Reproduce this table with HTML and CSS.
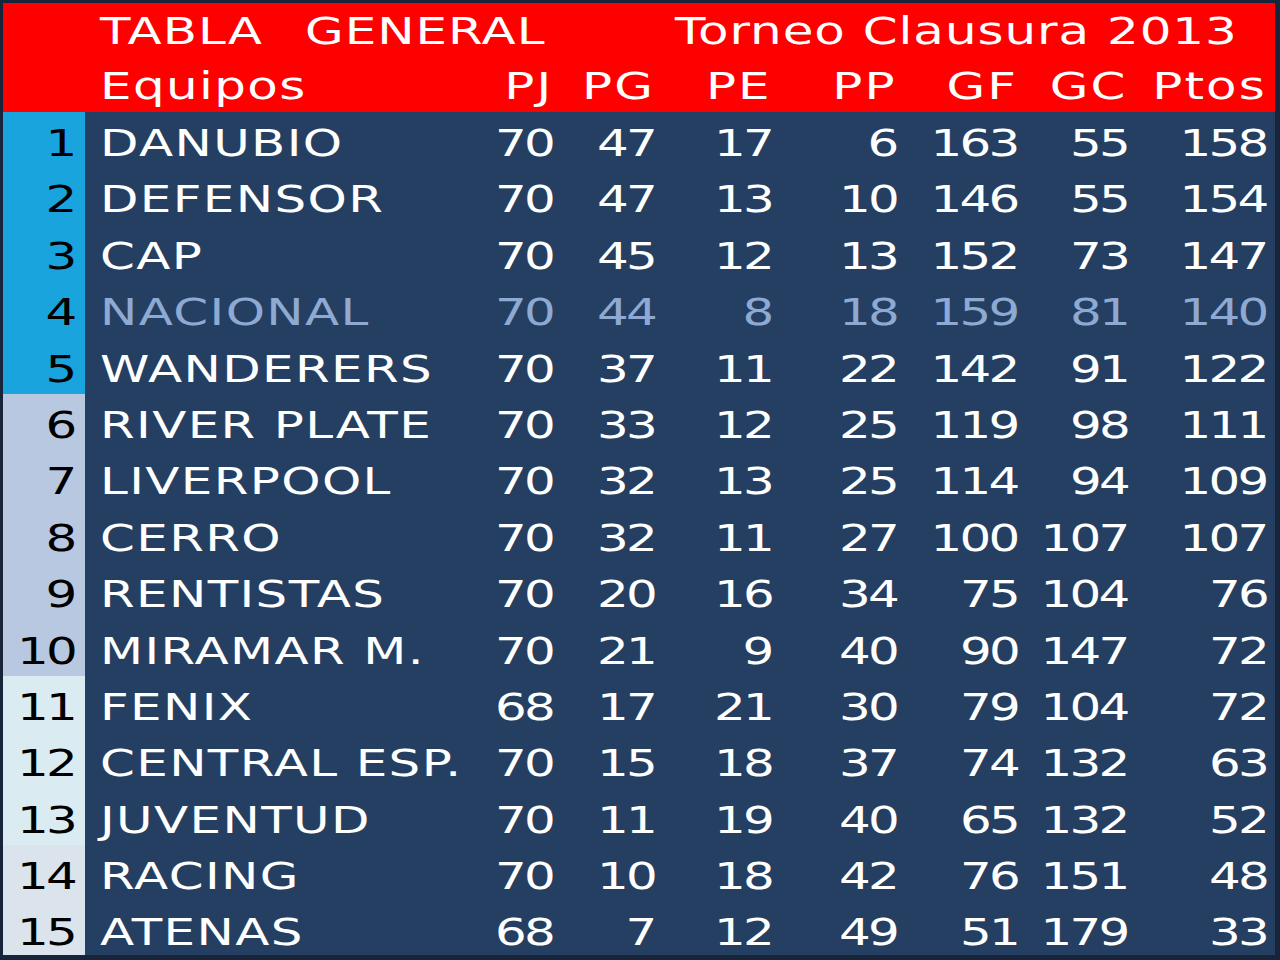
FILE: index.html
```html
<!DOCTYPE html>
<html lang="es">
<head>
<meta charset="utf-8">
<title>Tabla General - Torneo Clausura 2013</title>
<link rel="stylesheet" href="styles.css">
</head>
<body>
<div class="board">
  <div class="header">
    <div class="title">
      <span class="part p1"><span class="t">TABLA</span></span>
      <span class="part p2"><span class="t">GENERAL</span></span>
      <span class="part p3"><span class="t">Torneo Clausura 2013</span></span>
    </div>
    <div class="row head">
      <div class="rank"></div>
      <div class="name"><span class="t">Equipos</span></div>
      <div class="num"><span class="t">PJ</span></div>
      <div class="num"><span class="t">PG</span></div>
      <div class="num"><span class="t">PE</span></div>
      <div class="num"><span class="t">PP</span></div>
      <div class="num"><span class="t">GF</span></div>
      <div class="num"><span class="t">GC</span></div>
      <div class="num"><span class="t">Ptos</span></div>
    </div>
  </div>
  <div class="body">
    <div class="row"><div class="rank q1"><span class="t">1</span></div><div class="name"><span class="t">DANUBIO</span></div><div class="num"><span class="t">70</span></div><div class="num"><span class="t">47</span></div><div class="num"><span class="t">17</span></div><div class="num"><span class="t">6</span></div><div class="num"><span class="t">163</span></div><div class="num"><span class="t">55</span></div><div class="num"><span class="t">158</span></div></div>
    <div class="row"><div class="rank q1"><span class="t">2</span></div><div class="name"><span class="t">DEFENSOR</span></div><div class="num"><span class="t">70</span></div><div class="num"><span class="t">47</span></div><div class="num"><span class="t">13</span></div><div class="num"><span class="t">10</span></div><div class="num"><span class="t">146</span></div><div class="num"><span class="t">55</span></div><div class="num"><span class="t">154</span></div></div>
    <div class="row"><div class="rank q1"><span class="t">3</span></div><div class="name"><span class="t">CAP</span></div><div class="num"><span class="t">70</span></div><div class="num"><span class="t">45</span></div><div class="num"><span class="t">12</span></div><div class="num"><span class="t">13</span></div><div class="num"><span class="t">152</span></div><div class="num"><span class="t">73</span></div><div class="num"><span class="t">147</span></div></div>
    <div class="row dim"><div class="rank q1"><span class="t">4</span></div><div class="name"><span class="t">NACIONAL</span></div><div class="num"><span class="t">70</span></div><div class="num"><span class="t">44</span></div><div class="num"><span class="t">8</span></div><div class="num"><span class="t">18</span></div><div class="num"><span class="t">159</span></div><div class="num"><span class="t">81</span></div><div class="num"><span class="t">140</span></div></div>
    <div class="row"><div class="rank q1"><span class="t">5</span></div><div class="name"><span class="t">WANDERERS</span></div><div class="num"><span class="t">70</span></div><div class="num"><span class="t">37</span></div><div class="num"><span class="t">11</span></div><div class="num"><span class="t">22</span></div><div class="num"><span class="t">142</span></div><div class="num"><span class="t">91</span></div><div class="num"><span class="t">122</span></div></div>
    <div class="row"><div class="rank q2"><span class="t">6</span></div><div class="name"><span class="t">RIVER PLATE</span></div><div class="num"><span class="t">70</span></div><div class="num"><span class="t">33</span></div><div class="num"><span class="t">12</span></div><div class="num"><span class="t">25</span></div><div class="num"><span class="t">119</span></div><div class="num"><span class="t">98</span></div><div class="num"><span class="t">111</span></div></div>
    <div class="row"><div class="rank q2"><span class="t">7</span></div><div class="name"><span class="t">LIVERPOOL</span></div><div class="num"><span class="t">70</span></div><div class="num"><span class="t">32</span></div><div class="num"><span class="t">13</span></div><div class="num"><span class="t">25</span></div><div class="num"><span class="t">114</span></div><div class="num"><span class="t">94</span></div><div class="num"><span class="t">109</span></div></div>
    <div class="row"><div class="rank q2"><span class="t">8</span></div><div class="name"><span class="t">CERRO</span></div><div class="num"><span class="t">70</span></div><div class="num"><span class="t">32</span></div><div class="num"><span class="t">11</span></div><div class="num"><span class="t">27</span></div><div class="num"><span class="t">100</span></div><div class="num"><span class="t">107</span></div><div class="num"><span class="t">107</span></div></div>
    <div class="row"><div class="rank q2"><span class="t">9</span></div><div class="name"><span class="t">RENTISTAS</span></div><div class="num"><span class="t">70</span></div><div class="num"><span class="t">20</span></div><div class="num"><span class="t">16</span></div><div class="num"><span class="t">34</span></div><div class="num"><span class="t">75</span></div><div class="num"><span class="t">104</span></div><div class="num"><span class="t">76</span></div></div>
    <div class="row"><div class="rank q2"><span class="t">10</span></div><div class="name"><span class="t">MIRAMAR M.</span></div><div class="num"><span class="t">70</span></div><div class="num"><span class="t">21</span></div><div class="num"><span class="t">9</span></div><div class="num"><span class="t">40</span></div><div class="num"><span class="t">90</span></div><div class="num"><span class="t">147</span></div><div class="num"><span class="t">72</span></div></div>
    <div class="row"><div class="rank q3"><span class="t">11</span></div><div class="name"><span class="t">FENIX</span></div><div class="num"><span class="t">68</span></div><div class="num"><span class="t">17</span></div><div class="num"><span class="t">21</span></div><div class="num"><span class="t">30</span></div><div class="num"><span class="t">79</span></div><div class="num"><span class="t">104</span></div><div class="num"><span class="t">72</span></div></div>
    <div class="row"><div class="rank q3"><span class="t">12</span></div><div class="name"><span class="t">CENTRAL ESP.</span></div><div class="num"><span class="t">70</span></div><div class="num"><span class="t">15</span></div><div class="num"><span class="t">18</span></div><div class="num"><span class="t">37</span></div><div class="num"><span class="t">74</span></div><div class="num"><span class="t">132</span></div><div class="num"><span class="t">63</span></div></div>
    <div class="row"><div class="rank q3"><span class="t">13</span></div><div class="name"><span class="t">JUVENTUD</span></div><div class="num"><span class="t">70</span></div><div class="num"><span class="t">11</span></div><div class="num"><span class="t">19</span></div><div class="num"><span class="t">40</span></div><div class="num"><span class="t">65</span></div><div class="num"><span class="t">132</span></div><div class="num"><span class="t">52</span></div></div>
    <div class="row"><div class="rank q4"><span class="t">14</span></div><div class="name"><span class="t">RACING</span></div><div class="num"><span class="t">70</span></div><div class="num"><span class="t">10</span></div><div class="num"><span class="t">18</span></div><div class="num"><span class="t">42</span></div><div class="num"><span class="t">76</span></div><div class="num"><span class="t">151</span></div><div class="num"><span class="t">48</span></div></div>
    <div class="row"><div class="rank q4"><span class="t">15</span></div><div class="name"><span class="t">ATENAS</span></div><div class="num"><span class="t">68</span></div><div class="num"><span class="t">7</span></div><div class="num"><span class="t">12</span></div><div class="num"><span class="t">49</span></div><div class="num"><span class="t">51</span></div><div class="num"><span class="t">179</span></div><div class="num"><span class="t">33</span></div></div>
  </div>
</div>
</body>
</html>
```
FILE: styles.css
```css
html, body {
  margin: 0;
  padding: 0;
}
body {
  background: #17243a;
  width: 1280px;
  height: 960px;
  overflow: hidden;
  font-family: "DejaVu Sans", Verdana, sans-serif;
  font-size: 37px;
}
.board {
  margin: 3px 5px 0 3px;
  width: 1272px;
  height: 952px;
  overflow: hidden;
  background: #253f62;
  --cols: 82px 375px 93px 102px 117px 125px 121px 110px 139px 8px;
}
.header {
  background: #fe0000;
  color: #ffffff;
}
.title {
  height: 54.5px;
  box-sizing: border-box;
  padding: 5px 0 0 97px;
  line-height: 48px;
  display: flex;
  white-space: nowrap;
  letter-spacing: 0.7px;
}
.part { display: block; }
.p1 { width: 205px; }
.p2 { width: 370px; }
.p3 { flex: 1; }
.t {
  display: inline-block;
  transform: scaleX(1.35);
  transform-origin: left center;
  white-space: nowrap;
}
.row {
  display: grid;
  grid-template-columns: var(--cols);
  height: 56.4px;
  line-height: 48px;
  color: #ffffff;
}
.row.head {
  height: 54.5px;
}
.row > div {
  box-sizing: border-box;
  padding-top: 8px;
  white-space: nowrap;
}
.row.head > div {
  padding-top: 5px;
}
.name {
  padding-left: 15px;
  letter-spacing: 1px;
}
.num, .rank {
  text-align: right;
  letter-spacing: -2px;
}
.num .t, .rank .t {
  transform-origin: right center;
}
.row.head .num {
  letter-spacing: 1.5px;
}
.rank {
  padding-right: 10px;
  color: #000000;
}
.q1 { background: #19a4de; }
.q2 { background: #b8c8e0; }
.q3 { background: #daecf2; }
.q4 { background: #dbe3ed; }
.row.dim { color: #8eaad2; }
.row.dim .rank { color: #000000; }
```
